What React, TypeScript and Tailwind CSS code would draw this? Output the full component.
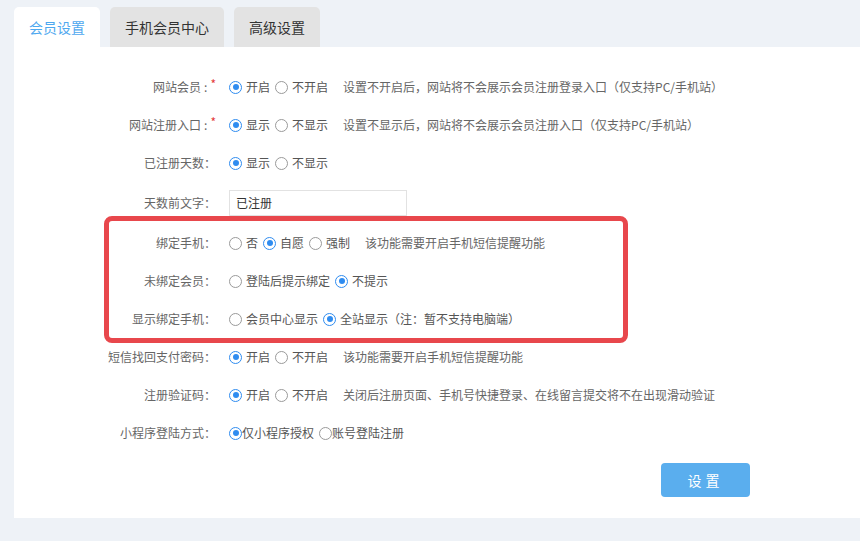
import React from 'react';

// Radio kichik komponent
const Radio: React.FC<{ checked?: boolean }> = ({ checked = false }) => (
  <span
    className={`inline-flex items-center justify-center w-[13px] h-[13px] rounded-full border-[1.5px] bg-white shrink-0 ${
      checked ? 'border-[#2f8cf0]' : 'border-[#9a9a9a]'
    }`}
  >
    {checked && <span className="block w-[6px] h-[6px] rounded-full bg-[#2f8cf0]" />}
  </span>
);

interface Option {
  label: string;
  checked?: boolean;
}

interface RowProps {
  label: string;
  required?: boolean;
  options?: Option[];
  tight?: boolean;
  desc?: string;
  tall?: boolean;
  children?: React.ReactNode;
}

const Row: React.FC<RowProps> = ({ label, required, options, tight, desc, tall, children }) => (
  <div className={`flex items-center ${tall ? 'h-[42px]' : 'h-[38px]'}`}>
    <div className="w-[202px] shrink-0 flex justify-end text-[#666]">
      <span>{label}</span>
      {required ? (
        <>
          <span className="ml-[3px]">:</span>
          <span className="ml-[3px] text-[#e4393c] leading-none self-start">*</span>
        </>
      ) : (
        <span>：</span>
      )}
    </div>
    <div className="ml-[13px] flex items-center text-[#555]">
      {options?.map((o, i) => (
        <label
          key={o.label}
          className={`flex items-center ${tight ? 'gap-0' : 'gap-[4px]'} ${i > 0 ? 'ml-[5px]' : ''}`}
        >
          <Radio checked={o.checked} />
          <span>{o.label}</span>
        </label>
      ))}
      {children}
      {desc && <span className="ml-[15px] text-[#666]">{desc}</span>}
    </div>
  </div>
);

const App: React.FC = () => {
  return (
    <div
      className="w-[860px] h-[541px] bg-[#eef2f7] pt-[7px] pl-[14px] overflow-hidden"
      style={{ fontFamily: '"Noto Sans CJK SC", "Noto Sans", sans-serif' }}
    >
      {/* Tablar */}
      <div className="flex gap-[10px] h-[40px]">
        <div className="w-[86px] bg-white rounded-t-[5px] flex items-center justify-center text-[14px] text-[#4ea8ef]">
          会员设置
        </div>
        <div className="w-[114px] bg-[#e3e3e3] rounded-t-[5px] flex items-center justify-center text-[14px] text-[#333]">
          手机会员中心
        </div>
        <div className="w-[86px] bg-[#e3e3e3] rounded-t-[5px] flex items-center justify-center text-[14px] text-[#333]">
          高级设置
        </div>
      </div>

      {/* Asosiy panel */}
      <div className="relative bg-white h-[471px] pt-[21px] text-[12px]">
        <Row
          label="网站会员"
          required
          options={[{ label: '开启', checked: true }, { label: '不开启' }]}
          desc="设置不开启后，网站将不会展示会员注册登录入口（仅支持PC/手机站）"
        />
        <Row
          label="网站注册入口"
          required
          options={[{ label: '显示', checked: true }, { label: '不显示' }]}
          desc="设置不显示后，网站将不会展示会员注册入口（仅支持PC/手机站）"
        />
        <Row label="已注册天数" options={[{ label: '显示', checked: true }, { label: '不显示' }]} />
        <Row label="天数前文字" tall>
          <div className="w-[178px] h-[26px] border border-[#e2e2e2] flex items-center px-[6px] text-[#333]">
            已注册
          </div>
        </Row>
        <Row
          label="绑定手机"
          options={[{ label: '否' }, { label: '自愿', checked: true }, { label: '强制' }]}
          desc="该功能需要开启手机短信提醒功能"
        />
        <Row label="未绑定会员" options={[{ label: '登陆后提示绑定' }, { label: '不提示', checked: true }]} />
        <Row
          label="显示绑定手机"
          options={[{ label: '会员中心显示' }, { label: '全站显示（注：暂不支持电脑端）', checked: true }]}
        />
        <Row
          label="短信找回支付密码"
          options={[{ label: '开启', checked: true }, { label: '不开启' }]}
          desc="该功能需要开启手机短信提醒功能"
        />
        <Row
          label="注册验证码"
          options={[{ label: '开启', checked: true }, { label: '不开启' }]}
          desc="关闭后注册页面、手机号快捷登录、在线留言提交将不在出现滑动验证"
        />
        <Row
          label="小程序登陆方式"
          tight
          options={[{ label: '仅小程序授权', checked: true }, { label: '账号登陆注册' }]}
        />

        <div className="pl-[647px] mt-[11px]">
          <button className="w-[89px] h-[34px] rounded-[4px] bg-[#5aaeee] text-white text-[14px] tracking-[4px]">
            设置
          </button>
        </div>

        {/* Qizil belgi ramkasi */}
        <div className="absolute left-[90px] top-[169px] w-[524px] h-[127px] border-[5px] border-[#e8474c] rounded-[8px] pointer-events-none" />
      </div>
    </div>
  );
};

export default App;
